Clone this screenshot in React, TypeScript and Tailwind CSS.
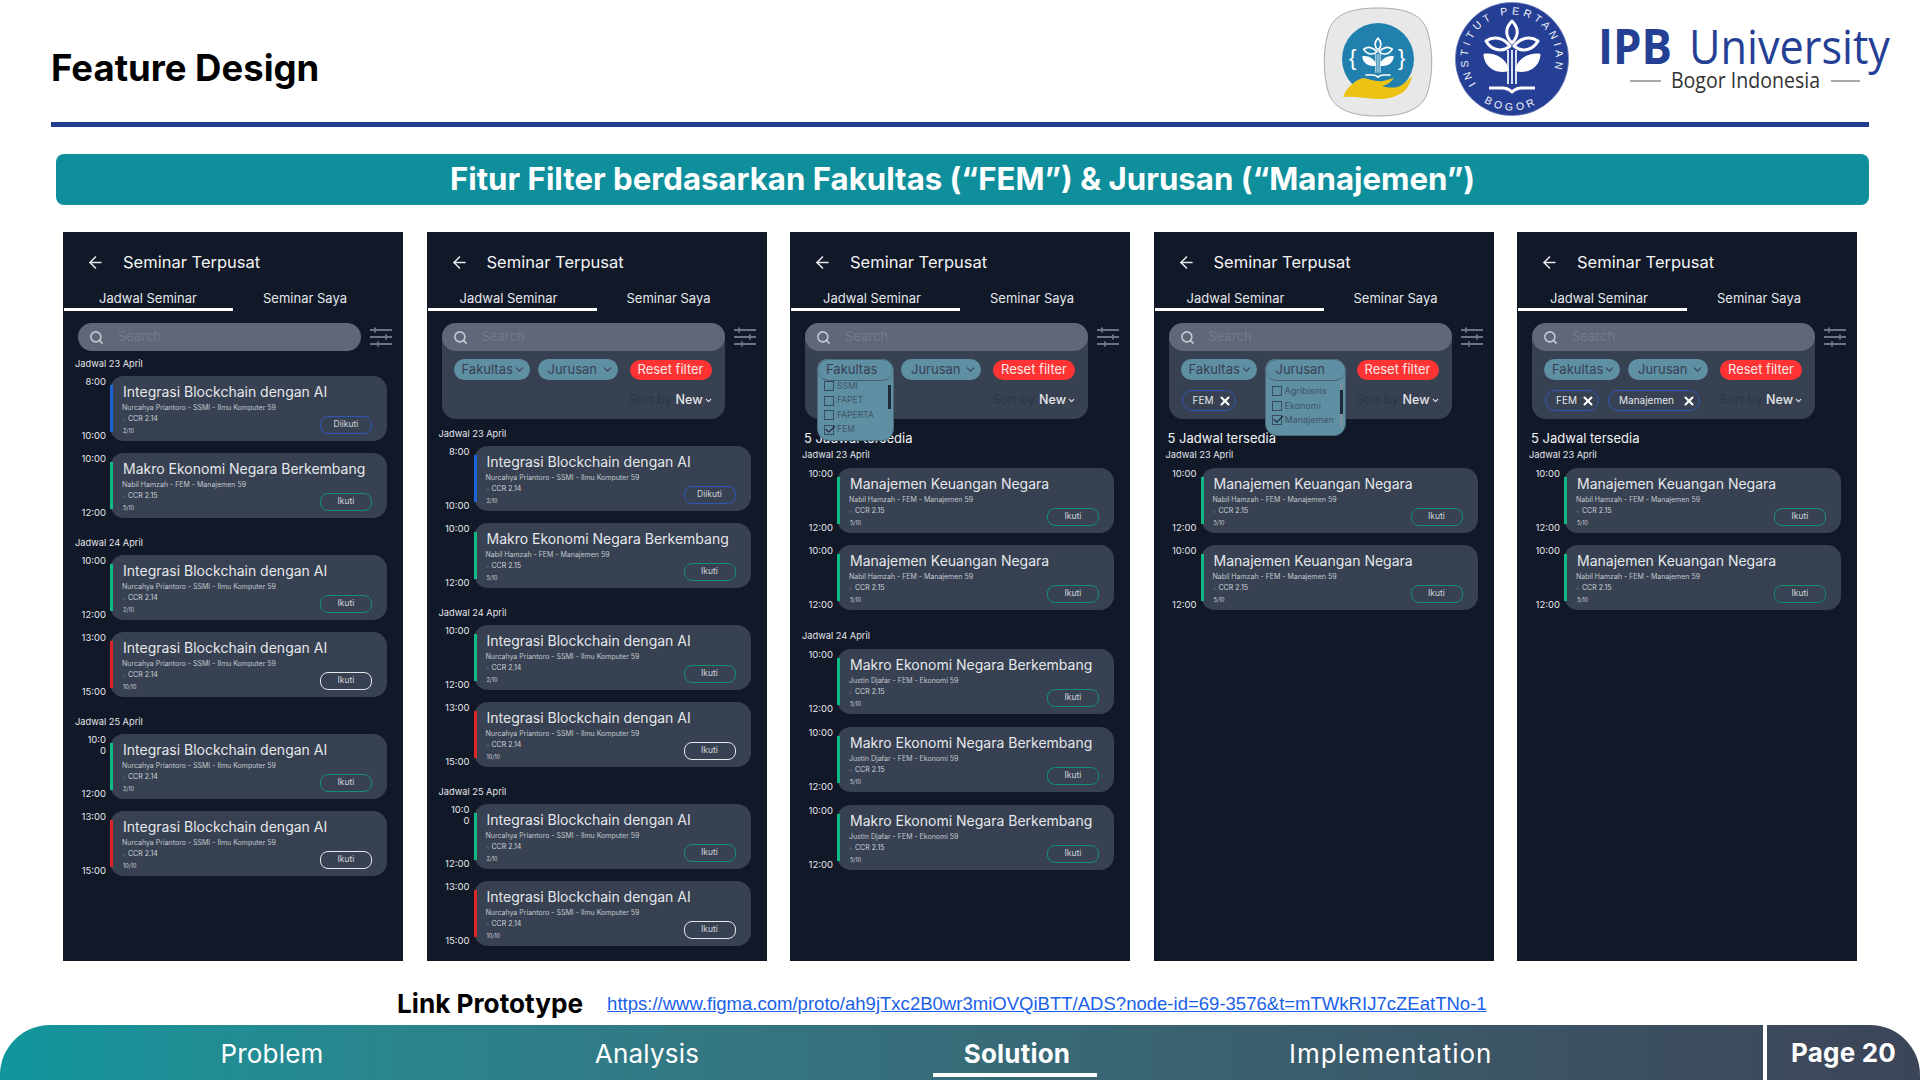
import React from "react";
import { ArrowLeft, Search, X, ChevronDown, Check } from "lucide-react";

const INT = "Integrasi Blockchain dengan AI";
const MAK = "Makro Ekonomi Negara Berkembang";
const MAN = "Manajemen Keuangan Negara";
const NUR = "Nurcahya Priantoro - SSMI - Ilmu Komputer 59";
const NAB = "Nabil Hamzah - FEM - Manajemen 59";
const JUS = "Justin Djafar - FEM - Ekonomi 59";

type C = { t: string; s: string; r: string; n: string; k: "blue" | "green" | "red"; a: string; b: string };
const c = (t: string, s: string, r: string, n: string, k: C["k"], a: string, b: string): C => ({ t, s, r, n, k, a, b });

const baseGroups: { d: string; cards: C[] }[] = [
  { d: "Jadwal 23 April", cards: [c(INT, NUR, "CCR 2.14", "2/10", "blue", "8:00", "10:00"), c(MAK, NAB, "CCR 2.15", "5/10", "green", "10:00", "12:00")] },
  { d: "Jadwal 24 April", cards: [c(INT, NUR, "CCR 2.14", "2/10", "green", "10:00", "12:00"), c(INT, NUR, "CCR 2.14", "10/10", "red", "13:00", "15:00")] },
  { d: "Jadwal 25 April", cards: [c(INT, NUR, "CCR 2.14", "2/10", "green", "10:0|0", "12:00"), c(INT, NUR, "CCR 2.14", "10/10", "red", "13:00", "15:00")] },
];
const man = c(MAN, NAB, "CCR 2.15", "5/10", "green", "10:00", "12:00");
const mak = c(MAK, JUS, "CCR 2.15", "5/10", "green", "10:00", "12:00");
const filteredLong = [
  { d: "Jadwal 23 April", cards: [man, man] },
  { d: "Jadwal 24 April", cards: [mak, mak, mak] },
];
const filteredShort = [{ d: "Jadwal 23 April", cards: [man, man] }];

function FilterIcon() {
  return (
    <svg width="22" height="20" viewBox="0 0 22 20" className="shrink-0">
      <g stroke="#6b7280" strokeWidth="2">
        <path d="M0 3h22M0 10h22M0 17h22" />
        <path d="M5 0.5v5M16 7.5v5M8 14.5v5" />
      </g>
    </svg>
  );
}

function Card({ x }: { x: C }) {
  const strip = x.k === "blue" ? "bg-[#1d63d8]" : x.k === "green" ? "bg-[#10b981]" : "bg-[#dc2626]";
  const btn = x.k === "blue" ? "border-[#2f55b8]" : x.k === "green" ? "border-[#10906f]" : "border-[#e5e7eb]";
  const [l1, l2] = x.a.split("|");
  return (
    <div className="flex h-[65px]">
      <div className="w-[47px] shrink-0 flex flex-col justify-between pr-[4px] text-right text-[9.5px] leading-[11px] text-[#e5e7eb]">
        <span>
          {l1}
          {l2 && <br />}
          {l2}
        </span>
        <span>{x.b}</span>
      </div>
      <div className="flex-1 min-w-0 h-full rounded-[14px] bg-[#374151] flex items-center">
        <div className={`w-[3px] h-[47px] shrink-0 ${strip}`} />
        <div className="flex-1 min-w-0 h-full pl-[10px] pt-[7px] text-[#d1d5db] whitespace-nowrap">
          <div className="text-[14px] leading-[18px] text-[#e5e7eb]">{x.t}</div>
          <div className="mt-[2px] ml-[-1px] text-[7px] leading-[10px] text-[#c3c7cd]">{x.s}</div>
          <div className="mt-[1px] ml-[-1px] flex items-center text-[7px] leading-[10px]">
            <span className="w-[3px] h-[3px] rounded-full bg-[#4b5563] mr-[3px]" />
            {x.r}
          </div>
          <div className="mt-[2px] text-[5.5px] leading-[10px]">{x.n}</div>
        </div>
        <div className={`self-end mb-[7px] mr-[15px] shrink-0 w-[52px] h-[18px] rounded-[8px] border-[1.5px] ${btn} flex items-center justify-center pb-[2px] text-[8.5px] text-[#d1d5db]`}>
          {x.k === "blue" ? "Diikuti" : "Ikuti"}
        </div>
      </div>
    </div>
  );
}

function Tag({ t, w }: { t: string; w: string }) {
  return (
    <div className={`${w} h-[21px] rounded-full border-[1.5px] border-[#2f55b8] flex items-center justify-between pl-[10px] pr-[3px] text-[10px] text-[#e5e7eb]`}>
      <span>{t}</span>
      <X size={14} strokeWidth={3.5} className="text-white" />
    </div>
  );
}

function Box({ on }: { on?: boolean }) {
  return (
    <span className="relative w-[10px] h-[10px] shrink-0 border border-[#374b5c] mr-[3px]">
      {on && <Check size={13} strokeWidth={2} className="absolute left-[-1px] top-[-3px] text-[#1f2937]" />}
    </span>
  );
}

function Dropdown({ kind }: { kind: "fak" | "jur" }) {
  const fak = kind === "fak";
  const items = fak ? ["SSMI", "FAPET", "FAPERTA", "FEM"] : ["Agribisnis", "Ekonomi", "Manajemen"];
  return (
    <div className={`absolute top-[36px] rounded-[12px] border border-[#4a6a7c] bg-[#5f8fa3] ${fak ? "left-[12px] w-[77px] h-[82px]" : "left-[96px] w-[81px] h-[77px]"}`}>
      <div className={`h-[21px] rounded-[12px] border-b-[1.5px] border-[#44606f] flex items-center text-[13px] text-[#374151] ${fak ? "pl-[8px]" : "pl-[10px]"}`}>
        {fak ? "Fakultas" : "Jurusan"}
      </div>
      <div className={`flex flex-col pl-[6px] text-[#3f5566] ${fak ? "text-[8.5px] gap-[4.5px] mt-[0px]" : "text-[9px] gap-[4.5px] mt-[5px]"}`}>
        {items.map((i) => (
          <div key={i} className="flex items-center h-[10px]">
            <Box on={i === "FEM" || i === "Manajemen"} />
            {i}
          </div>
        ))}
      </div>
      {fak ? (
        <div className="absolute right-[2px] top-[25px] w-[3px] h-[24px] bg-[#1f2937]" />
      ) : (
        <div className="absolute right-[2px] top-[23px] w-[3px] h-[45px] bg-[#78909c]">
          <div className="mt-[7px] w-[3px] h-[24px] bg-[#1f2937]" />
        </div>
      )}
    </div>
  );
}

function Chip({ t, w, open, pad }: { t: string; w: string; open?: boolean; pad: string }) {
  return (
    <div className={`${w} ${pad} h-[21px] rounded-full bg-[#5f8fa3] flex items-center justify-between pr-[4px] text-[13px] text-[#374151]`}>
      <span>{t}</span>
      {!open && <ChevronDown size={13} className="text-[#374151]" />}
    </div>
  );
}

function SearchBar({ panel }: { panel: boolean }) {
  return (
    <div className={`h-[28px] rounded-[14px] bg-[#5f6778] flex items-center pl-[11px] text-[13px] text-[#737b8b] ${panel ? "" : "w-[283px]"}`}>
      <Search size={15} strokeWidth={2.5} className="text-[#c5c9d0] mr-[14px]" />
      Search
    </div>
  );
}

function Phone({
  panel,
  drop,
  tags,
  count,
  groups,
  top,
  tab,
}: {
  panel?: boolean;
  drop?: "fak" | "jur";
  tags?: string[];
  count?: boolean;
  groups: { d: string; cards: C[] }[];
  top: string;
  tab: string;
}) {
  return (
    <div className="w-[340px] h-[729px] shrink-0 bg-[#111827] flex flex-col font-['Inter',sans-serif] text-white overflow-hidden">
      <div className="h-[61px] flex items-center pl-[23px] text-[16.5px] shrink-0">
        <ArrowLeft size={19} strokeWidth={2} className="text-[#e5e7eb] mr-[18px]" />
        <span className="text-[#f3f4f6]">Seminar Terpusat</span>
      </div>
      <div className="h-[19px] mt-[-4px] flex text-[13px] leading-[18px] text-[#e5e7eb] shrink-0">
        <div className={`w-[170px] text-center ${tab}`}>Jadwal Seminar</div>
        <div className="w-[144px] text-center whitespace-nowrap">Seminar Saya</div>
      </div>
      <div className="ml-[1px] w-[169px] h-[3px] bg-white shrink-0" />
      <div className="pl-[15px] pt-[12px] flex items-start gap-[9px] shrink-0">
        {panel ? (
          <div className="relative w-[283px] h-[96px] rounded-[14px] bg-[#374151]">
            <SearchBar panel />
            <div className="flex items-center pl-[12px] mt-[8px]">
              <Chip t="Fakultas" w="w-[76px]" pad="pl-[8px]" open={drop === "fak"} />
              <div className="w-[8px]" />
              <Chip t="Jurusan" w="w-[80px]" pad="pl-[10px]" open={drop === "jur"} />
              <div className="ml-[12px] w-[82px] h-[20px] rounded-full bg-[#ff3333] flex items-center justify-center text-[13px] text-[#fde8e8]">
                Reset filter
              </div>
            </div>
            <div className="flex items-center pl-[13px] pr-[12px] mt-[10px] h-[21px]">
              <div className="flex gap-[9px]">
                {(tags ?? []).map((t) => (
                  <Tag key={t} t={t} w={t === "FEM" ? "w-[54px]" : "w-[92px]"} />
                ))}
              </div>
              <div className="ml-auto flex items-center text-[12.5px]">
                <span className="text-[#2d3646]">Sort by</span>
                <span className="ml-[4px] text-[#e5e7eb] font-medium">New</span>
                <ChevronDown size={9} strokeWidth={3} className="ml-[1px] text-[#e5e7eb]" />
              </div>
            </div>
            {drop && <Dropdown kind={drop} />}
          </div>
        ) : (
          <SearchBar panel={false} />
        )}
        <div className="pt-[4px]">
          <FilterIcon />
        </div>
      </div>
      <div className={top}>
        {count && <div className="pl-[14px] text-[13px] leading-[16px] text-[#f3f4f6] mb-[2px]">5 Jadwal tersedia</div>}
        {groups.map((g, i) => {
          const long = g.cards.length === 3;
          return (
            <div key={i} className={i > 0 ? (long ? "mt-[19px]" : "mt-[18px]") : ""}>
              <div className="pl-[12px] pt-[1px] text-[9.25px] leading-[12px] text-[#e5e7eb]">{g.d}</div>
              <div className={`flex flex-col pr-[16px] ${long ? "gap-[13px]" : "gap-[12px]"} ${count ? "mt-[7px]" : "mt-[6px]"}`}>
                {g.cards.map((x, j) => (
                  <Card key={j} x={x} />
                ))}
              </div>
            </div>
          );
        })}
      </div>
    </div>
  );
}

function Plant({ stroke = 3, fill }: { stroke?: number; fill: string }) {
  return (
    <g fill={fill} stroke="#ffffff" strokeWidth={stroke} strokeLinejoin="round">
      <path d="M0 -38C7 -31 7 -23 0 -16C-7 -23 -7 -31 0 -38Z" />
      <path d="M-2 -13C-9 -22 -19 -23 -26 -18C-21 -9 -10 -6 -2 -13Z" />
      <path d="M2 -13C9 -22 19 -23 26 -18C21 -9 10 -6 2 -13Z" />
      <path d="M-5 11C-6 2 -16 -5 -27 -4C-26 7 -16 13 -5 11Z" fill="#ffffff" />
      <path d="M5 11C6 2 16 -5 27 -4C26 7 16 13 5 11Z" fill="#ffffff" />
      <path d="M-4 -9V25M0 -9V25M4 -9V25" fill="none" strokeWidth={stroke * 0.55} />
      <path d="M-23 29H-10Q-4 29 0 33Q4 29 10 29H23" fill="none" strokeWidth={stroke} />
    </g>
  );
}

function LogoApp() {
  return (
    <svg width="110" height="110" viewBox="0 0 110 110" className="shrink-0">
      <path d="M55 1C80 1 100 6 105 26C110 45 110 65 105 84C100 103 80 109 55 109C30 109 10 103 5 84C0 65 0 45 5 26C10 6 30 1 55 1Z" fill="#e9e8e9" stroke="#aaaaaa" />
      <circle cx="55" cy="52" r="36" fill="#2180ae" />
      <g transform="translate(55 52) scale(0.55)">
        <Plant stroke={3} fill="#2180ae" />
      </g>
      <text x="26" y="58" fontSize="22" fill="#ffffff" fontFamily="Liberation Sans">{"{"}</text>
      <text x="75" y="58" fontSize="22" fill="#ffffff" fontFamily="Liberation Sans">{"}"}</text>
      <path d="M20 90C23 82 30 74 40 71C47 72 52 75 60 74C64 73 67 72 71 71C68 75 64 78 59 79C66 81 72 81 77 79C81 77 85 73 89 69C87 78 83 84 77 87C70 91 63 92 55 92C43 92 32 89 20 90Z" fill="#edc313" />
    </svg>
  );
}

function LogoIPB() {
  return (
    <svg width="116" height="116" viewBox="-58 -58 116 116" className="shrink-0">
      <defs>
        <path id="arcTop" d="M-36 25A44 44 0 1 1 37 23" />
        <path id="arcBot" d="M-28 43A51 51 0 0 0 28 43" />
      </defs>
      <circle r="56.7" fill="#253f95" stroke="#8c9ac8" strokeWidth="0.6" />
      <text fontSize="10.5" fill="#f1f3f9" fontFamily="Liberation Sans" letterSpacing="3.9">
        <textPath href="#arcTop">INSTITUT PERTANIAN</textPath>
      </text>
      <text fontSize="10.5" fill="#f1f3f9" fontFamily="Liberation Sans" letterSpacing="3.6">
        <textPath href="#arcBot">BOGOR</textPath>
      </text>
      <Plant fill="#253f95" stroke={3} />
    </svg>
  );
}

function LogoText() {
  return (
    <svg width="300" height="90" viewBox="0 0 300 90" className="shrink-0">
      <text x="1" y="52" fontSize="48" fontWeight="700" fill="#253f95" fontFamily="Open Sans" textLength="74" lengthAdjust="spacingAndGlyphs">IPB</text>
      <text x="92" y="52" fontSize="48" fill="#253f95" fontFamily="Open Sans" textLength="201" lengthAdjust="spacingAndGlyphs">University</text>
      <text x="74" y="76" fontSize="21" fill="#333333" fontFamily="Open Sans" textLength="149" lengthAdjust="spacingAndGlyphs">Bogor Indonesia</text>
      <path d="M33 69H64M234 69H263" stroke="#555555" strokeWidth="1.2" />
    </svg>
  );
}

export default function App() {
  return (
    <div className="relative w-[1920px] h-[1080px] bg-white overflow-hidden flex flex-col font-['Inter',sans-serif]">
      <div className="h-[122px] shrink-0 flex items-start pl-[51px] pr-[23px]">
        <div className="mt-[46px] text-[36.5px] leading-[44px] font-bold text-black">Feature Design</div>
        <div className="ml-auto mt-[7px]"><LogoApp /></div>
        <div className="ml-[21px] mt-[1px]"><LogoIPB /></div>
        <div className="ml-[27px] mt-[12px]"><LogoText /></div>
      </div>
      <div className="mx-[51px] h-[5px] bg-[#1f3c8f] shrink-0" />
      <div className="ml-[56px] mr-[51px] mt-[27px] h-[51px] rounded-[8px] bg-[#0f8f9c] shrink-0 flex items-center justify-center text-[31.2px] font-bold text-white">
        Fitur Filter berdasarkan Fakultas (“FEM”) &amp; Jurusan (“Manajemen”)
      </div>
      <div className="mt-[27px] pl-[63px] flex gap-[23.5px] shrink-0">
        <Phone tab="" groups={baseGroups} top="mt-[6px]" />
        <Phone tab="pr-[6px]" panel groups={baseGroups} top="mt-[8px]" />
        <Phone tab="pr-[6px]" panel drop="fak" count groups={filteredLong} top="mt-[11px]" />
        <Phone tab="pr-[6px]" panel drop="jur" tags={["FEM"]} count groups={filteredShort} top="mt-[11px]" />
        <Phone tab="pr-[6px]" panel tags={["FEM", "Manajemen"]} count groups={filteredShort} top="mt-[11px]" />
      </div>
      <div className="h-[64px] shrink-0 flex items-center pl-[397px] pt-[22px]">
        <span className="text-[26.2px] font-bold text-black">Link Prototype</span>
        <a className="ml-[24px] font-['Liberation_Sans',sans-serif] text-[18.55px] text-[#1a5fe8] underline" href="#">
          https://www.figma.com/proto/ah9jTxc2B0wr3miOVQiBTT/ADS?node-id=69-3576&amp;t=mTWkRIJ7cZEatTNo-1
        </a>
      </div>
      <div className="h-[55px] shrink-0 rounded-t-[50px] bg-gradient-to-r from-[#0f969c] to-[#3c4458] flex text-white text-[26px] tracking-[0.2px]">
        <div className="ml-[172px] w-[200px] text-center leading-[58px]">Problem</div>
        <div className="ml-[175px] w-[200px] text-center leading-[58px]">Analysis</div>
        <div className="ml-[170px] w-[200px] flex flex-col items-center">
          <div className="font-bold leading-[58px]">Solution</div>
          <div className="mt-[-10px] w-[164px] h-[4px] bg-white -translate-x-[2px]" />
        </div>
        <div className="ml-[172px] w-[200px] text-center leading-[58px] whitespace-nowrap tracking-[1px]">Implementation</div>
        <div className="ml-auto w-[157px] border-l-[4px] border-white flex items-center justify-center font-bold">Page 20</div>
      </div>
    </div>
  );
}
